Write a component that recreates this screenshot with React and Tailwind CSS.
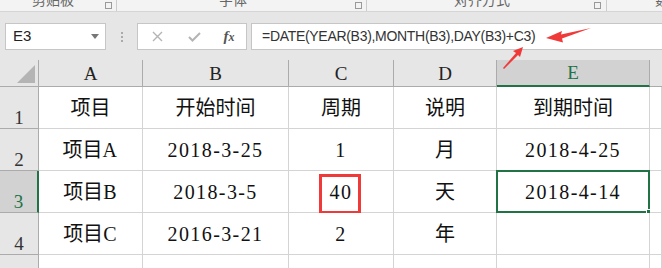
import React from "react";

const cellFont = { fontFamily: '"Liberation Serif", "Noto Sans CJK SC", serif' };

function Cell({ children, className = "" }) {
  return (
    <div className={"relative flex items-center justify-center border-r border-b border-[#d4d4d4] bg-white text-[20px] text-[#111] " + className} style={cellFont}>
      {children}
    </div>
  );
}

function RowHead({ n, selected }) {
  return (
    <div
      className={
        "flex items-end justify-center border-b border-r text-[19px] leading-none " +
        (selected
          ? "bg-[#d2d2d2] border-b-[#ababab] border-r-[2px] border-r-[#217346] text-[#217346]"
          : "bg-[#e6e6e6] border-[#ababab] text-[#333]")
      }
      style={{ fontFamily: '"Liberation Serif", serif' }}
    >
      <span className="mb-[1px]">{n}</span>
    </div>
  );
}

function ColHead({ l, selected }) {
  return (
    <div
      className={
        "flex items-center justify-center border-r text-[19px] leading-none " +
        (selected
          ? "bg-[#d2d2d2] border-r-[#ababab] border-b-[2px] border-b-[#217346] text-[#217346]"
          : "bg-[#e6e6e6] border-b border-[#ababab] text-[#222]")
      }
      style={{ fontFamily: '"Liberation Serif", serif' }}
    >
      {l}
    </div>
  );
}

const D = ({ children }) => <span className="tracking-[1.4px]">{children}</span>;

export default function App() {
  return (
    <div className="relative w-[662px] h-[268px] overflow-hidden bg-white" style={{ fontFamily: '"Liberation Sans", "Noto Sans CJK SC", sans-serif' }}>
      {/* Ribbon group labels (clipped) */}
      <div className="relative h-[12px] bg-[#f3f3f3] border-b border-[#d5d5d5] text-[14px] text-[#666] overflow-hidden">
        <div className="absolute left-[32px] top-[-10px]">剪贴板</div>
        <div className="absolute left-[105px] top-[2px] w-[7px] h-[7px] border border-[#999]" />
        <div className="absolute left-[116px] top-0 h-[12px] w-px bg-[#ccc]" />
        <div className="absolute left-[219px] top-[-10px]">字体</div>
        <div className="absolute left-[355px] top-[2px] w-[7px] h-[7px] border border-[#999]" />
        <div className="absolute left-[366px] top-0 h-[12px] w-px bg-[#ccc]" />
        <div className="absolute left-[454px] top-[-10px]">对齐方式</div>
        <div className="absolute left-[594px] top-[2px] w-[7px] h-[7px] border border-[#999]" />
        <div className="absolute left-[606px] top-0 h-[12px] w-px bg-[#ccc]" />
        <div className="absolute left-[655px] top-[-10px]">数字</div>
      </div>

      {/* Formula bar */}
      <div className="h-[48px] bg-[#e6e6e6] flex items-start pt-[11px] pl-[5px]">
        <div className="w-[101px] h-[27px] bg-white border border-[#c6c6c6] flex items-center justify-between pl-[7px] pr-[6px]">
          <span className="text-[15px] text-[#222]">E3</span>
          <svg width="8" height="5" viewBox="0 0 8 5"><path d="M0 0H8L4 5Z" fill="#777" /></svg>
        </div>
        <div className="w-[31px] h-[27px] flex flex-col items-center justify-center gap-[2px]">
          <div className="w-[2px] h-[2px] bg-[#aaa]" />
          <div className="w-[2px] h-[2px] bg-[#aaa]" />
          <div className="w-[2px] h-[2px] bg-[#aaa]" />
        </div>
        <div className="w-[110px] h-[27px] bg-white border border-[#c6c6c6] flex items-center">
          <div className="w-[38px] flex justify-center">
            <svg width="11" height="11" viewBox="0 0 11 11"><path d="M1 1L10 10M10 1L1 10" stroke="#b4b4b4" strokeWidth="1.4" /></svg>
          </div>
          <div className="w-[36px] flex justify-center">
            <svg width="13" height="10" viewBox="0 0 13 10"><path d="M1 5L4.5 8.5L12 1" stroke="#b4b4b4" strokeWidth="2" fill="none" /></svg>
          </div>
          <div className="w-[34px] flex justify-center items-baseline text-[15px] italic font-bold text-[#555]" style={{ fontFamily: '"Liberation Serif", serif' }}>
            f<span className="text-[12px]">x</span>
          </div>
        </div>
        <div className="ml-[4px] flex-1 h-[27px] bg-white border border-[#c6c6c6] border-r-0 flex items-center pl-[10px] text-[14px] tracking-[-0.3px] text-[#333]">
          =DATE(YEAR(B3),MONTH(B3),DAY(B3)+C3)
        </div>
      </div>

      {/* Grid */}
      <div className="grid grid-cols-[39px_104px_146px_105px_103px_153px_1fr] grid-rows-[27px_42px_42px_42px_42px_42px]">
        <div className="relative bg-[#e6e6e6] border-b border-r border-[#ababab]">
          <svg className="absolute right-[3px] bottom-[3px]" width="18" height="18" viewBox="0 0 18 18"><path d="M18 0V18H0Z" fill="#b4b4b4" /></svg>
        </div>
        <ColHead l="A" />
        <ColHead l="B" />
        <ColHead l="C" />
        <ColHead l="D" />
        <ColHead l="E" selected />
        <div className="bg-[#e6e6e6] border-b border-[#ababab]" />

        <RowHead n="1" />
        <Cell>项目</Cell>
        <Cell>开始时间</Cell>
        <Cell>周期</Cell>
        <Cell>说明</Cell>
        <Cell>到期时间</Cell>
        <Cell />

        <RowHead n="2" />
        <Cell>项目<D>A</D></Cell>
        <Cell><D>2018-3-25</D></Cell>
        <Cell><D>1</D></Cell>
        <Cell>月</Cell>
        <Cell><D>2018-4-25</D></Cell>
        <Cell />

        <RowHead n="3" selected />
        <Cell>项目<D>B</D></Cell>
        <Cell><D>2018-3-5</D></Cell>
        <Cell>
          <D>40</D>
          <div className="absolute left-[30px] top-[3px] w-[42px] h-[40px] border-[3px] border-[#f03a3a]" />
        </Cell>
        <Cell>天</Cell>
        <Cell>
          <D>2018-4-14</D>
          <div className="absolute -left-px -top-px w-[154px] h-[43px] border-2 border-[#217346]" />
          <div className="absolute right-[-4px] bottom-[-4px] w-[7px] h-[7px] bg-[#217346] border border-white" />
        </Cell>
        <Cell />

        <RowHead n="4" />
        <Cell>项目<D>C</D></Cell>
        <Cell><D>2016-3-21</D></Cell>
        <Cell><D>2</D></Cell>
        <Cell>年</Cell>
        <Cell />
        <Cell />

        <RowHead n="5" />
        <Cell />
        <Cell />
        <Cell />
        <Cell />
        <Cell />
        <Cell />
      </div>

      {/* Annotation arrows */}
      <svg className="absolute left-0 top-0 pointer-events-none" width="662" height="268" viewBox="0 0 662 268">
        <path d="M591 28 L561 34.5 L562 31 L546 38 L563 42.5 L562 38.5 Z" fill="#f03a3a" />
        <path d="M503 68 L516 53 L513 51 L523 47 L520 57 L518 55 L504 69 Z" fill="#f03a3a" />
      </svg>
    </div>
  );
}
